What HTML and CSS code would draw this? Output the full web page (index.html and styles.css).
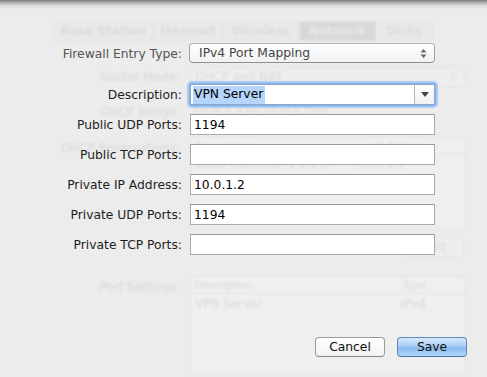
FILE: index.html
```html
<!DOCTYPE html>
<html>
<head>
<meta charset="utf-8">
<link rel="stylesheet" href="styles.css">
</head>
<body>
<div class="window">
  <div class="behind" aria-hidden="true">
    <div class="tabs">
      <span class="tab t1">Base Station</span>
      <span class="tab t2">Internet</span>
      <span class="tab t3">Wireless</span>
      <span class="tab t4 sel">Network</span>
      <span class="tab t5">Disks</span>
    </div>
    <div class="brow r1">
      <span class="blabel">Router Mode:</span>
      <span class="bpopup">DHCP and NAT<span class="bstep">&#8661;</span></span>
    </div>
    <div class="brow r2">
      <span class="blabel">DHCP Range:</span>
      <span class="btext">10.0.1.2 to 10.0.1.200</span>
    </div>
    <div class="brow r3">
      <span class="blabel top">DHCP Reservations:</span>
      <div class="btable short">
        <div class="bhead"><span>Description</span><span>IP Address</span></div>
        <div class="bcell"><span>Apple Macintosh 1.1.1.X</span><span>10.0.1.X</span></div>
      </div>
    </div>
    <div class="brow r4">
      <span></span>
      <div class="bbtns"><span class="bbtn">Edit</span></div>
    </div>
    <div class="brow r5">
      <span class="blabel top">Port Settings:</span>
      <div class="btable tall">
        <div class="bhead"><span>Description</span><span>Type</span></div>
        <div class="bcell"><span>VPN Server</span><span>IPv4</span></div>
      </div>
    </div>
  </div>

  <div class="topshadow"></div>

  <form class="sheet">
    <div class="grid">
      <label class="lbl dim first">Firewall Entry Type:</label>
      <div class="popup first">
        <span>IPv4 Port Mapping</span>
        <svg class="stepper" width="7" height="11" viewBox="0 0 7 11"><path d="M3.5 1 L6.5 4.5 L0.5 4.5 Z M0.5 6.5 L6.5 6.5 L3.5 10 Z" fill="#6a6a6a"/></svg>
      </div>

      <label class="lbl">Description:</label>
      <div class="combo">
        <span class="ctext"><span class="selected">VPN Server</span></span>
        <span class="cbtn"><svg width="8" height="5" viewBox="0 0 8 5"><path d="M0 0 L8 0 L4 5 Z" fill="#444"/></svg></span>
      </div>

      <label class="lbl">Public UDP Ports:</label>
      <div class="field">1194</div>

      <label class="lbl">Public TCP Ports:</label>
      <div class="field"></div>

      <label class="lbl">Private IP Address:</label>
      <div class="field">10.0.1.2</div>

      <label class="lbl">Private UDP Ports:</label>
      <div class="field">1194</div>

      <label class="lbl">Private TCP Ports:</label>
      <div class="field"></div>
    </div>
    <div class="buttons">
      <button type="button" class="btn">Cancel</button>
      <button type="button" class="btn primary">Save</button>
    </div>
  </form>
</div>
</body>
</html>
```

FILE: styles.css
```css
* { box-sizing: border-box; }
html, body { margin: 0; padding: 0; }
body {
  background: #ececec;
  font-family: "DejaVu Sans", "Liberation Sans", sans-serif;
  font-size: 12.3px;
}
.window {
  position: relative;
  width: 487px;
  height: 377px;
  overflow: hidden;
  background: #ececec;
}

/* faded window content behind the sheet */
.behind {
  padding-top: 21px;
  filter: blur(1px);
  color: #dadada;
  font-size: 12px;
}
.tabs {
  display: flex;
  margin-left: 53px;
  width: 380px;
  height: 20px;
  border: 1px solid #e1e1e1;
  border-radius: 4px;
  background: #e9e9e9;
  overflow: hidden;
}
.tab {
  display: flex;
  align-items: center;
  justify-content: center;
  border-right: 1px solid #e1e1e1;
  font-weight: bold;
  color: #dcdcdc;
}
.tab.t1 { width: 100px; }
.tab.t2 { width: 69px; }
.tab.t3 { width: 77px; }
.tab.t4 { width: 76px; }
.tab.t5 { flex: 1; border-right: 0; }
.tab.sel { background: #d8d8d8; color: #e6e6e6; }

.brow {
  display: grid;
  grid-template-columns: 180px 275px;
  column-gap: 10px;
  align-items: center;
}
.r1 { margin-top: 26px; height: 20px; }
.r2 { margin-top: 17px; height: 16px; }
.r3 { margin-top: 17px; align-items: start; }
.r4 { margin-top: 8px; }
.r5 { margin-top: 19px; align-items: start; }
.blabel { text-align: right; color: #d8d8d8; }
.blabel.top { padding-top: 4px; }
.bpopup {
  position: relative;
  height: 20px;
  border: 1px solid #e2e2e2;
  border-radius: 4px;
  padding-left: 4px;
  line-height: 18px;
  background: #eeeeee;
}
.bstep { position: absolute; right: 6px; top: 0; color: #dddddd; }
.btext { padding-left: 3px; }
.btable {
  border: 1px solid #e3e3e3;
  background: #efefef;
}
.btable.short { height: 92px; }
.btable.tall { height: 100px; }
.bhead, .bcell {
  display: flex;
  justify-content: space-between;
  padding: 0 38px 0 4px;
}
.bhead { height: 17px; line-height: 17px; font-size: 10px; border-bottom: 1px solid #e5e5e5; }
.bcell { height: 20px; line-height: 20px; }
.btable.short .bcell { padding-right: 60px; font-size: 11px; }
.bbtns { display: flex; justify-content: flex-end; padding-right: 1px; }
.bbtn {
  width: 60px;
  height: 20px;
  border: 1px solid #e1e1e1;
  border-radius: 4px;
  background: #eeeeee;
  text-align: center;
  line-height: 18px;
}

.topshadow {
  position: absolute;
  left: 0; top: 0; right: 0;
  height: 9px;
  background: linear-gradient(#7d7d7d 0%, #a9a9a9 25%, #d8d8d8 60%, rgba(236,236,236,0) 100%);
}

/* the sheet */
.sheet {
  position: absolute;
  inset: 0;
  padding-top: 43px;
  margin: 0;
}
.grid {
  display: grid;
  grid-template-columns: 182px 245px;
  column-gap: 8px;
  row-gap: 9px;
  align-items: center;
}
.grid .first { margin-bottom: 12px; }
.lbl {
  text-align: right;
  color: #1e1e1e;
  white-space: nowrap;
  line-height: 14px;
  padding-top: 1px;
}
.lbl.dim { color: #555; }
.popup {
  position: relative;
  display: flex;
  align-items: center;
  height: 20px;
  margin-left: -1px;
  padding-left: 9px;
  border: 1px solid #a4a4a4;
  border-top-color: #b4b4b4;
  border-bottom-color: #8f8f8f;
  border-radius: 4px;
  background: linear-gradient(#ffffff, #f1f1f1);
  color: #444;
}
.stepper { position: absolute; right: 7px; top: 4px; }
.combo {
  display: flex;
  height: 21px;
  border: 1px solid #8fa8c6;
  border-radius: 2px;
  background: #fff;
  box-shadow: 0 0 0 1px #7fb0ec, 0 0 1px 3px #a9c9f2;
}
.ctext {
  flex: 1;
  display: flex;
  align-items: center;
  padding-left: 2px;
}
.selected {
  background: #b5d5fd;
  color: #000;
  padding: 1px 2px 2px 1px;
  line-height: 15px;
}
.cbtn {
  width: 20px;
  display: flex;
  align-items: center;
  justify-content: center;
  border-left: 1px solid #b8b8b8;
  background: linear-gradient(#ffffff, #f0f0f0);
}
.field {
  height: 21px;
  padding: 2px 0 0 3px;
  border: 1px solid #a9a9a9;
  border-top-color: #9a9a9a;
  background: #fff;
  color: #000;
  line-height: 17px;
}
.buttons {
  display: flex;
  justify-content: flex-end;
  gap: 12px;
  margin-top: 82px;
  padding-right: 20px;
}
.btn {
  width: 70px;
  height: 20px;
  padding: 0;
  border: 1px solid #9b9b9b;
  border-bottom-color: #868686;
  border-radius: 4px;
  background: linear-gradient(#ffffff, #f2f2f2);
  font-family: "DejaVu Sans", "Liberation Sans", sans-serif;
  font-size: 12.3px;
  color: #111;
  line-height: 18px;
}
.btn.primary {
  border-color: #5b87ba;
  border-bottom-color: #4a74a6;
  background: linear-gradient(#d9eafc 0%, #a6cdf5 45%, #88bbf0 55%, #b4d8fb 100%);
}
```
